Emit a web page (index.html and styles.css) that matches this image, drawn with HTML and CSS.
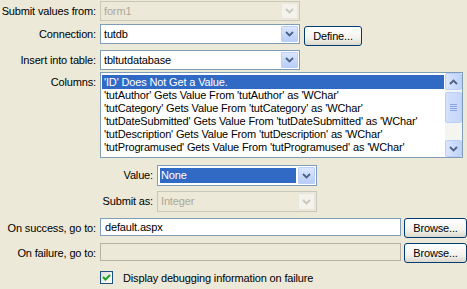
FILE: index.html
```html
<!DOCTYPE html>
<html>
<head>
  <title>Insert Record</title>
  <link rel="stylesheet" href="styles.css">
</head>
<body>
  <div class="dialog">
    <div class="row r-from">
      <span class="lbl">Submit values from:</span>
      <div class="combo disabled w-main">
        <span class="val">form1</span>
        <span class="drop"><svg width="9" height="6" viewBox="0 0 9 6"><path d="M1 1 L4.5 4.5 L8 1" fill="none" stroke="currentColor" stroke-width="1.8"/></svg></span>
      </div>
    </div>

    <div class="row r-conn">
      <span class="lbl">Connection:</span>
      <div class="combo w-main">
        <span class="val">tutdb</span>
        <span class="drop"><svg width="9" height="6" viewBox="0 0 9 6"><path d="M1 1 L4.5 4.5 L8 1" fill="none" stroke="currentColor" stroke-width="1.8"/></svg></span>
      </div>
      <button class="btn btn-define">Define...</button>
    </div>

    <div class="row r-table">
      <span class="lbl">Insert into table:</span>
      <div class="combo w-main">
        <span class="val">tbltutdatabase</span>
        <span class="drop"><svg width="9" height="6" viewBox="0 0 9 6"><path d="M1 1 L4.5 4.5 L8 1" fill="none" stroke="currentColor" stroke-width="1.8"/></svg></span>
      </div>
    </div>

    <div class="row r-cols">
      <span class="lbl">Columns:</span>
      <div class="listbox">
        <ul class="items">
          <li class="sel">'ID' Does Not Get a Value.</li>
          <li>'tutAuthor' Gets Value From 'tutAuthor' as 'WChar'</li>
          <li>'tutCategory' Gets Value From 'tutCategory' as 'WChar'</li>
          <li>'tutDateSubmitted' Gets Value From 'tutDateSubmitted' as 'WChar'</li>
          <li>'tutDescription' Gets Value From 'tutDescription' as 'WChar'</li>
          <li>'tutProgramused' Gets Value From 'tutProgramused' as 'WChar'</li>
        </ul>
        <div class="scrollbar">
          <span class="sb-btn"><svg width="9" height="6" viewBox="0 0 9 6"><path d="M1 5 L4.5 1.5 L8 5" fill="none" stroke="currentColor" stroke-width="1.8"/></svg></span>
          <span class="sb-track">
            <span class="sb-thumb"><span class="grip"></span><span class="grip"></span><span class="grip"></span><span class="grip"></span></span>
          </span>
          <span class="sb-btn"><svg width="9" height="6" viewBox="0 0 9 6"><path d="M1 1 L4.5 4.5 L8 1" fill="none" stroke="currentColor" stroke-width="1.8"/></svg></span>
        </div>
      </div>
    </div>

    <div class="row r-value">
      <span class="lbl lbl-sub">Value:</span>
      <div class="combo w-sub">
        <span class="val val-sel">None</span>
        <span class="drop"><svg width="9" height="6" viewBox="0 0 9 6"><path d="M1 1 L4.5 4.5 L8 1" fill="none" stroke="currentColor" stroke-width="1.8"/></svg></span>
      </div>
    </div>

    <div class="row r-as">
      <span class="lbl lbl-sub">Submit as:</span>
      <div class="combo disabled w-sub">
        <span class="val">Integer</span>
        <span class="drop"><svg width="9" height="6" viewBox="0 0 9 6"><path d="M1 1 L4.5 4.5 L8 1" fill="none" stroke="currentColor" stroke-width="1.8"/></svg></span>
      </div>
    </div>

    <div class="row r-ok">
      <span class="lbl">On success, go to:</span>
      <div class="field">default.aspx</div>
      <button class="btn btn-browse">Browse...</button>
    </div>

    <div class="row r-fail">
      <span class="lbl">On failure, go to:</span>
      <div class="field disabled"></div>
      <button class="btn btn-browse">Browse...</button>
    </div>

    <div class="row r-debug">
      <span class="lbl"></span>
      <span class="check"><svg width="9" height="9" viewBox="0 0 9 9"><path d="M1 4 L3.5 6.5 L8 2" fill="none" stroke="#21a121" stroke-width="2"/></svg></span>
      <span class="check-text">Display debugging information on failure</span>
    </div>
  </div>
</body>
</html>
```

FILE: styles.css
```css
body {
    margin: 0;
    background: #ece9d8;
    font-family: "Liberation Sans", Arial, sans-serif;
    font-size: 11px;
    letter-spacing: -0.15px;
    color: #000;
}

.dialog {
    width: 467px;
    height: 289px;
    overflow: hidden;
}

.row {
    display: flex;
    align-items: flex-start;
    white-space: nowrap;
}

.lbl {
    width: 96px;
    margin-right: 4px;
    text-align: right;
    flex: none;
    line-height: 20px;
}

.lbl-sub {
    width: 153px;
}

/* row spacing */
.r-from { margin-top: 1px; }
.r-conn { margin-top: 3px; }
.r-table { margin-top: 4px; }
.r-cols { margin-top: 2px; }
.r-value { margin-top: 7px; }
.r-as { margin-top: 5px; }
.r-ok { margin-top: 6px; }
.r-fail { margin-top: 5px; }
.r-debug { margin-top: 8px; align-items: center; }

/* combo boxes */
.combo {
    box-sizing: border-box;
    height: 20px;
    border: 1px solid #7f9db9;
    background: #fff;
    display: flex;
    align-items: stretch;
    padding: 1px;
}

.w-main { width: 200px; }
.w-sub { width: 160px; height: 21px; }

.combo .val {
    flex: 1;
    padding-left: 2px;
    line-height: 16px;
}

.combo .val-sel {
    background: #316ac5;
    color: #fff;
    margin: 1px 2px 1px 1px;
    padding-left: 1px;
    line-height: 15px;
}

.drop {
    width: 15px;
    flex: none;
    border: 1px solid #bccff9;
    border-radius: 1px;
    background: linear-gradient(#dbe6fe, #b9cdf7);
    color: #4d6185;
    display: flex;
    align-items: center;
    justify-content: center;
}

.combo.disabled {
    border-color: #c9c7ba;
    background: #ece9d8;
    color: #aca899;
}

.combo.disabled .drop {
    border-color: #e8e6dc;
    background: #f3f2eb;
    color: #c9c7ba;
}

/* buttons */
.btn {
    box-sizing: border-box;
    height: 20px;
    border: 1px solid #003c74;
    border-radius: 3px;
    background: linear-gradient(#ffffff, #f4f3ee 60%, #dcd8cc);
    font-family: "Liberation Sans", Arial, sans-serif;
    font-size: 11px;
    letter-spacing: -0.15px;
    color: #000;
    padding: 0;
}

.btn-define {
    width: 58px;
    margin-left: 4px;
    margin-top: 2px;
}

.btn-browse {
    width: 63px;
    margin-left: 3px;
}

/* list box */
.listbox {
    box-sizing: border-box;
    width: 363px;
    height: 86px;
    border: 1px solid #7f9db9;
    background: #fff;
    display: flex;
}

.items {
    flex: 1;
    list-style: none;
    margin: 0;
    padding: 2px 1px 0 1px;
    overflow: hidden;
}

.items li {
    height: 13px;
    line-height: 13px;
    padding-left: 2px;
}

.items li.sel {
    height: 14px;
    line-height: 14px;
    background: #316ac5;
    color: #fff;
}

.scrollbar {
    width: 17px;
    flex: none;
    display: flex;
    flex-direction: column;
    background: #f5f5f0;
}

.sb-btn {
    box-sizing: border-box;
    height: 17px;
    border: 1px solid #bccff9;
    border-radius: 2px;
    background: linear-gradient(90deg, #dae5fd, #c0d2f9);
    color: #4d6185;
    display: flex;
    align-items: center;
    justify-content: center;
}

.sb-track {
    flex: 1;
    padding-top: 2px;
}

.sb-thumb {
    box-sizing: border-box;
    display: flex;
    flex-direction: column;
    align-items: center;
    justify-content: center;
    gap: 1px;
    height: 31px;
    border: 1px solid #bccff9;
    border-radius: 2px;
    background: linear-gradient(90deg, #d3e0fd, #c6d6fa);
}

.grip {
    width: 7px;
    height: 1px;
    background: #8ca5e4;
}

/* text fields */
.field {
    box-sizing: border-box;
    width: 301px;
    height: 18px;
    border: 1px solid #7f9db9;
    background: #fff;
    padding-left: 4px;
    line-height: 16px;
}

.field.disabled {
    border-color: #b5b2a4;
    background: #ece9d8;
}

/* checkbox */
.check {
    box-sizing: border-box;
    width: 13px;
    height: 13px;
    border: 1px solid #1c5180;
    background: linear-gradient(135deg, #dcdcd7, #ffffff);
    display: flex;
    align-items: center;
    justify-content: center;
}

.check-text {
    margin-left: 10px;
}
```
